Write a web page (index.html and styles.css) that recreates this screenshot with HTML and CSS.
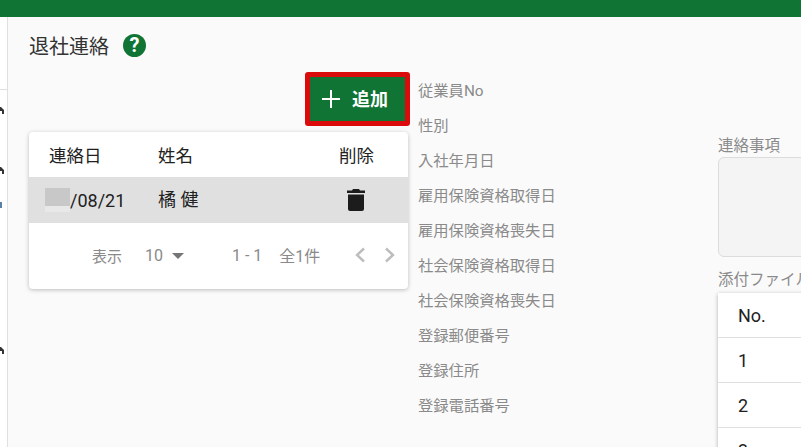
FILE: index.html
```html
<!DOCTYPE html>
<html lang="ja">
<head>
    <meta charset="UTF-8">
    <title>退社連絡</title>
    <link rel="stylesheet" href="styles.css">
</head>
<body>
    <div class="topbar"></div>
    <div class="layout">
        <nav class="sidebar">
            <div class="side-line"></div>
            <svg class="side-mark mark1" width="4" height="7" viewBox="0 0 4 7"><path d="M0 0h1l3 3v4H2V4H0z" fill="#333"/></svg>
            <svg class="side-mark mark2" width="4" height="7" viewBox="0 0 4 7"><path d="M0 0h1l3 3v4H2V4H0z" fill="#333"/></svg>
            <span class="side-blue mark3"></span>
            <svg class="side-mark mark4" width="4" height="7" viewBox="0 0 4 7"><path d="M0 0h1l3 3v4H2V4H0z" fill="#333"/></svg>
        </nav>
        <main class="main">
            <div class="title-row">
                <h1 class="title">退社連絡</h1>
                <span class="help">?</span>
            </div>
            <div class="columns">
                <section class="col-list">
                    <div class="add-wrap">
                        <button class="add-btn">
                            <svg class="add-icon" width="18" height="18" viewBox="0 0 18 18"><path d="M9 0v18M0 9h18" stroke="#fff" stroke-width="2" fill="none"/></svg>
                            <span>追加</span>
                        </button>
                    </div>
                    <div class="card">
                        <div class="row head">
                            <span class="c-date">連絡日</span>
                            <span class="c-name">姓名</span>
                            <span class="c-del">削除</span>
                        </div>
                        <div class="row selected">
                            <span class="c-date"><i class="redact"></i>/08/21</span>
                            <span class="c-name">橘 健</span>
                            <span class="c-del">
                                <svg class="trash" width="20" height="24" viewBox="0 0 20 24"><path d="M7 1h6l1 1.5h5V5H1V2.5h5zM2 6.5h16V21a2 2 0 0 1-2 2H4a2 2 0 0 1-2-2z" fill="#1c1c1c"/></svg>
                            </span>
                        </div>
                        <div class="pager">
                            <span class="pg-show">表示</span>
                            <span class="pg-size">10</span>
                            <span class="pg-caret"></span>
                            <span class="pg-range">1 - 1</span>
                            <span class="pg-total">全1件</span>
                            <svg class="pg-arrow" width="12" height="16" viewBox="0 0 12 16"><path d="M10 1.5 3 8l7 6.5" stroke="#bdbdbd" stroke-width="2.4" fill="none"/></svg>
                            <svg class="pg-arrow next" width="12" height="16" viewBox="0 0 12 16"><path d="M2 1.5 9 8l-7 6.5" stroke="#bdbdbd" stroke-width="2.4" fill="none"/></svg>
                        </div>
                    </div>
                </section>
                <section class="col-labels">
                    <div class="label">従業員No</div>
                    <div class="label">性別</div>
                    <div class="label">入社年月日</div>
                    <div class="label">雇用保険資格取得日</div>
                    <div class="label">雇用保険資格喪失日</div>
                    <div class="label">社会保険資格取得日</div>
                    <div class="label">社会保険資格喪失日</div>
                    <div class="label">登録郵便番号</div>
                    <div class="label">登録住所</div>
                    <div class="label">登録電話番号</div>
                </section>
                <section class="col-right">
                    <div class="field-label">連絡事項</div>
                    <div class="memo"></div>
                    <div class="field-label attach">添付ファイル</div>
                    <div class="file-table">
                        <div class="file-row"><span class="file-no head-no">No.</span></div>
                        <div class="file-row"><span class="file-no">1</span></div>
                        <div class="file-row"><span class="file-no">2</span></div>
                        <div class="file-row"><span class="file-no">3</span></div>
                    </div>
                </section>
            </div>
        </main>
    </div>
</body>
</html>
```

FILE: styles.css
```css
html, body {
    margin: 0;
    height: 447px;
    overflow: hidden;
}
body {
    background-color: #fafafa;
    font-family: Roboto, "Noto Sans CJK JP", sans-serif;
    color: #212121;
}
.topbar {
    height: 17px;
    background-color: #107534;
}
.layout {
    display: flex;
    height: 430px;
}
.sidebar {
    position: relative;
    flex: 0 0 7px;
    background-color: #fff;
    border-right: 1px solid #e0e0e0;
}
.side-line {
    margin-top: 72px;
    height: 1px;
    background-color: #e0e0e0;
}
.side-mark {
    position: absolute;
    left: 0;
}
.side-blue {
    position: absolute;
    left: 0;
    width: 2px;
    height: 6px;
    background-color: #5a7fa8;
}
.mark1 { top: 90px; }
.mark2 { top: 150px; }
.mark3 { top: 185px; }
.mark4 { top: 330px; }

.main {
    flex: 1;
    min-width: 0;
    padding-left: 21px;
}
.title-row {
    display: flex;
    align-items: center;
    gap: 14px;
    height: 30px;
    margin-top: 15px;
    position: relative;
    top: -2px;
}
.title {
    margin: 0;
    font-size: 20px;
    font-weight: 400;
    color: #333;
}
.help {
    width: 23px;
    height: 23px;
    border-radius: 50%;
    background-color: #107534;
    color: #fff;
    font-size: 20px;
    font-weight: 700;
    line-height: 23px;
    text-align: center;
}
.columns {
    display: flex;
}

/* lista */
.col-list {
    flex: 0 0 379px;
}
.add-wrap {
    display: flex;
    justify-content: flex-end;
    margin-right: -2px;
    margin-top: 10px;
}
.add-btn {
    display: flex;
    align-items: center;
    gap: 12px;
    box-sizing: border-box;
    width: 105px;
    height: 54px;
    padding: 0 0 3px 12px;
    border: 5px solid #dc0b0b;
    border-radius: 3px;
    background-color: #107534;
    color: #fff;
    font-family: inherit;
    font-size: 18px;
    font-weight: 700;
}
.add-icon {
    margin-top: 3px;
}
.card {
    margin-top: 6px;
    height: 157px;
    background-color: #fff;
    border-radius: 4px;
    box-shadow: 0 1px 4px rgba(0, 0, 0, 0.25);
}
.row {
    display: flex;
    align-items: center;
    font-size: 17.5px;
}
.row.head {
    height: 45px;
}
.row.selected {
    height: 46px;
    background-color: #e0e0e0;
    font-size: 18px;
}
.row.selected .c-name {
    position: relative;
    top: -2px;
}
.c-date {
    display: flex;
    align-items: center;
    flex: 0 0 109px;
    margin-left: 20px;
}
.c-name {
    flex: 0 0 181px;
}
.c-del {
    display: flex;
    justify-content: center;
    width: 35px;
}
.trash {
    margin-left: -2px;
}
.redact {
    display: block;
    flex: none;
    width: 25px;
    height: 24px;
    margin-left: -4px;
    background: linear-gradient(#c8c8c8 0 18px, #e8e8e8 18px);
}
.pager {
    display: flex;
    align-items: center;
    height: 64px;
    font-size: 15px;
    color: #8a8a8a;
}
.pg-show {
    margin-left: 63px;
}
.pg-size {
    margin-left: 23px;
    font-size: 16px;
}
.pg-caret {
    margin-left: 9px;
    margin-top: 2px;
    border-left: 6.5px solid transparent;
    border-right: 6.5px solid transparent;
    border-top: 6.5px solid #757575;
}
.pg-range {
    margin-left: 48px;
    font-size: 16px;
}
.pg-total {
    margin-left: 17px;
    font-size: 16px;
}
.pg-arrow {
    margin-left: 34px;
}
.pg-arrow.next {
    margin-left: 18px;
}

/* etiquetas */
.col-labels {
    flex: 0 0 300px;
    margin-left: 10px;
    padding-top: 12px;
}
.label {
    height: 35px;
    line-height: 35px;
    font-size: 15.3px;
    color: #8a8a8a;
    white-space: nowrap;
}

/* columna derecha */
.col-right {
    flex: 0 0 400px;
    padding-top: 72px;
}
.field-label {
    height: 23px;
    line-height: 24px;
    font-size: 15.5px;
    color: #8a8a8a;
}
.memo {
    box-sizing: border-box;
    height: 100px;
    background-color: #f5f4f4;
    border: 1px solid #dcdcdc;
    border-radius: 6px;
}
.field-label.attach {
    margin-top: 11px;
    height: 25px;
}
.file-table {
    background-color: #fff;
    box-shadow: 0 1px 4px rgba(0, 0, 0, 0.3);
}
.file-row {
    display: flex;
    align-items: center;
    height: 44px;
    border-bottom: 1px solid #e0e0e0;
    font-size: 18px;
}
.file-no {
    width: 50px;
    text-align: center;
}
.file-no.head-no {
    padding-left: 20px;
    width: auto;
}
```
